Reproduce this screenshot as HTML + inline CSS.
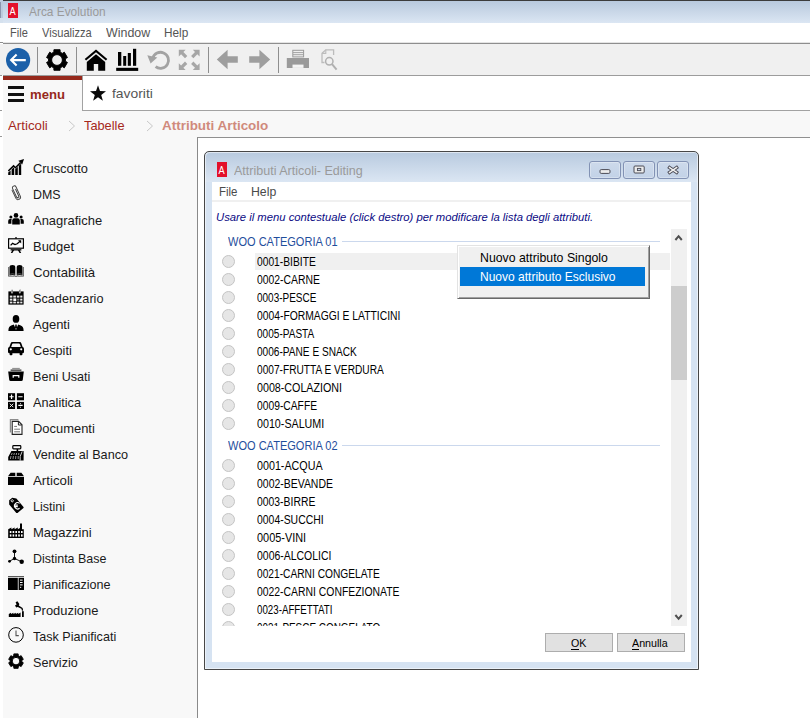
<!DOCTYPE html>
<html lang="it"><head><meta charset="utf-8"><title>Arca Evolution</title><style>html,body{margin:0;padding:0}body{width:810px;height:718px;position:relative;overflow:hidden;background:#fff;font-family:"Liberation Sans",sans-serif}
.r{position:absolute}.t{position:absolute;white-space:nowrap;transform-origin:0 0}</style></head><body>
<div class="r" style="left:0px;top:0px;width:3px;height:18px;background:#bccadc;"></div>
<div class="r" style="left:0px;top:18px;width:3px;height:5px;background:#d5e1ee;"></div>
<div class="r" style="left:0px;top:2px;width:1px;height:16px;background:#8c95ad;"></div>
<div class="r" style="left:0px;top:44px;width:3px;height:31px;background:#f0f0f0;"></div>
<div class="r" style="left:0px;top:75px;width:2px;height:1px;background:#999;"></div>
<div class="r" style="left:0px;top:110px;width:2px;height:1px;background:#999;"></div>
<div class="r" style="left:0px;top:136px;width:2px;height:1px;background:#999;"></div>
<div class="r" style="left:3px;top:0px;width:807px;height:1px;background:#3c3c3c;"></div>
<div class="r" style="left:3px;top:1px;width:807px;height:22px;background:linear-gradient(#b8c9dd,#dbe6f3);"></div>
<div class="r" style="left:8px;top:3px;width:10px;height:15px;background:#e3102a;color:#fff;font-size:11px;line-height:15px;text-align:center;overflow:hidden"><span style="display:inline-block;position:relative;top:0.5px;transform:scaleX(.84)">A</span></div>
<span id="t1" class="t" style="left:29px;top:5.00px;font-size:13px;line-height:13px;color:#9a9a9a;transform:scaleX(0.9143);">Arca Evolution</span>
<div class="r" style="left:3px;top:23px;width:807px;height:19px;background:#fff;"></div>
<span id="t2" class="t" style="left:10px;top:26.00px;font-size:13px;line-height:13px;color:#555;transform:scaleX(0.8476);">File</span>
<span id="t3" class="t" style="left:42px;top:26.00px;font-size:13px;line-height:13px;color:#555;transform:scaleX(0.8534);">Visualizza</span>
<span id="t4" class="t" style="left:106px;top:26.00px;font-size:13px;line-height:13px;color:#555;transform:scaleX(0.9565);">Window</span>
<span id="t5" class="t" style="left:164px;top:26.00px;font-size:13px;line-height:13px;color:#555;transform:scaleX(0.9074);">Help</span>
<div class="r" style="left:3px;top:42px;width:807px;height:1px;background:#e4e4e4;"></div>
<div class="r" style="left:3px;top:43px;width:807px;height:1px;background:#8e8e8e;"></div>
<div class="r" style="left:0px;top:42px;width:3px;height:1px;background:#8e8e8e;"></div>
<div class="r" style="left:3px;top:44px;width:807px;height:31px;background:#f0f0f0;"></div>
<div class="r" style="left:3px;top:75px;width:807px;height:1px;background:#9c9c9c;"></div>
<div class="r" style="left:37px;top:47px;width:1px;height:26px;background:#8e8e8e;"></div>
<div class="r" style="left:76px;top:47px;width:1px;height:26px;background:#8e8e8e;"></div>
<div class="r" style="left:208px;top:47px;width:1px;height:26px;background:#8e8e8e;"></div>
<div class="r" style="left:278px;top:47px;width:1px;height:26px;background:#8e8e8e;"></div>
<svg class="r" style="left:3px;top:44px" width="340" height="31" viewBox="3 44 340 31">
<circle cx="18.1" cy="60.1" r="12.1" fill="#1b60a9"/>
<path d="M25.8 60.1 H11.5 M16.6 54.6 L11.1 60.1 L16.6 65.6" stroke="#fff" stroke-width="2.1" fill="none" stroke-linecap="butt" stroke-linejoin="miter"/>
<path d="M53.95 52.06 L53.91 49.76 L60.09 49.76 L60.05 52.06 L62.35 53.39 L64.32 52.20 L67.42 57.56 L65.40 58.67 L65.40 61.33 L67.42 62.44 L64.32 67.80 L62.35 66.61 L60.05 67.94 L60.09 70.24 L53.91 70.24 L53.95 67.94 L51.65 66.61 L49.68 67.80 L46.58 62.44 L48.60 61.33 L48.60 58.67 L46.58 57.56 L49.68 52.20 L51.65 53.39 Z M51.60 60.00 A5.4 5.4 0 1 0 62.40 60.00 A5.4 5.4 0 1 0 51.60 60.00 Z" fill="#000" fill-rule="evenodd" stroke="#000" stroke-width="1" stroke-linejoin="round"/>
<!-- home -->
<path d="M96 49.4 L107.3 58.9 L105.9 60.6 L96 52.3 L86.1 60.6 L84.7 58.9 Z" fill="#000"/>
<path d="M96 54.3 L105.2 62 V70.8 H98.2 V64 H93.8 V70.8 H86.8 V62 Z" fill="#000"/>
<!-- chart -->
<rect x="116.2" y="67.8" width="22" height="3.1" fill="#000"/>
<rect x="118" y="52" width="3.3" height="13.8" fill="#000"/>
<rect x="123.2" y="56" width="3" height="9.8" fill="#000"/>
<rect x="127.8" y="53" width="3.1" height="12.8" fill="#000"/>
<rect x="133" y="48.8" width="3.2" height="17" fill="#000"/>
<!-- refresh -->
<path d="M152.8 58.2 A8 8 0 1 1 155.6 66.6" stroke="#a2a2a2" stroke-width="2.8" fill="none"/>
<path d="M147.3 55.2 L157.3 57.6 L150.6 63.6 Z" fill="#a2a2a2"/>
<!-- expand -->
<g fill="#a6a6a6" stroke="#a6a6a6" stroke-width="0">
<path d="M178.8 49.8 H185.6 L183.4 52 L187.3 55.9 L185 58.2 L181.1 54.3 L178.8 56.6 Z"/>
<path d="M199.6 49.8 V56.6 L197.3 54.3 L193.4 58.2 L191.1 55.9 L195 52 L192.8 49.8 Z"/>
<path d="M178.8 70 V63.2 L181.1 65.5 L185 61.6 L187.3 63.9 L183.4 67.8 L185.6 70 Z"/>
<path d="M199.6 70 H192.8 L195 67.8 L191.1 63.9 L193.4 61.6 L197.3 65.5 L199.6 63.2 Z"/>
</g>
<!-- arrows -->
<path d="M216.8 59.5 L227.6 49.8 V56.2 H237.8 V62.8 H227.6 V69.2 Z" fill="#9e9e9e"/>
<path d="M270.2 59.5 L259.4 49.8 V56.2 H249.2 V62.8 H259.4 V69.2 Z" fill="#9e9e9e"/>
<!-- printer -->
<rect x="286.8" y="58" width="22.2" height="10" fill="#9a9a9a"/>
<rect x="292.5" y="64.6" width="11" height="3.3" fill="#f4f4f4"/>
<rect x="292.8" y="50.3" width="10.8" height="6.6" fill="#f0f0f0" stroke="#9a9a9a" stroke-width="1"/>
<path d="M293 52.6 H303.4 M293 54.7 H303.4" stroke="#9a9a9a" stroke-width="0.9"/>
<!-- preview -->
<path d="M324.5 62.5 H322 V53.2 L325.8 49.8 H333.6 V55" stroke="#bcbcbc" stroke-width="1.3" fill="none"/>
<path d="M322 53.4 H325.8 V49.8" stroke="#bcbcbc" stroke-width="1.1" fill="none"/>
<circle cx="329.3" cy="61.3" r="3.7" stroke="#b0b0b0" stroke-width="1.5" fill="none"/>
<path d="M332 64.2 L336.6 69.6" stroke="#b0b0b0" stroke-width="2"/>
</svg>

<div class="r" style="left:3px;top:76px;width:807px;height:34px;background:#fff;"></div>
<div class="r" style="left:3px;top:76px;width:79px;height:35px;background:#f8f8f8;"></div>
<div class="r" style="left:3px;top:76px;width:79px;height:4px;background:#96281b;"></div>
<div class="r" style="left:82px;top:76px;width:1px;height:34px;background:#a2a2a2;"></div>
<div class="r" style="left:82px;top:110px;width:728px;height:1px;background:#a2a2a2;"></div>
<div class="r" style="left:8px;top:86px;width:16px;height:3px;background:#111;"></div>
<div class="r" style="left:8px;top:92.5px;width:16px;height:3px;background:#111;"></div>
<div class="r" style="left:8px;top:99px;width:16px;height:3px;background:#111;"></div>
<span id="t6" class="t" style="left:30.3px;top:88.00px;font-size:13px;line-height:13px;color:#96281b;font-weight:bold;transform:scaleX(1.0086);">menu</span>
<svg class="r" style="left:90px;top:85px" width="16" height="16" viewBox="0 0 16 16"><path d="M8 0.3 L10 6 L16 6.2 L11.2 9.9 L12.9 15.8 L8 12.3 L3.1 15.8 L4.8 9.9 L0 6.2 L6 6 Z" fill="#0a0a0a"/></svg>
<span id="t7" class="t" style="left:112px;top:87.00px;font-size:13px;line-height:13px;color:#555;transform:scaleX(1.0658);">favoriti</span>
<div class="r" style="left:3px;top:111px;width:807px;height:26px;background:#f8f8f8;"></div>
<div class="r" style="left:3px;top:137px;width:194px;height:1px;background:#f8f8f8;"></div>
<span id="t8" class="t" style="left:8px;top:119.00px;font-size:13px;line-height:13px;color:#a5281c;transform:scaleX(1.0205);">Articoli</span>
<span id="t9" class="t" style="left:84px;top:119.00px;font-size:13px;line-height:13px;color:#a5281c;transform:scaleX(0.9829);">Tabelle</span>
<span id="t10" class="t" style="left:162px;top:119.00px;font-size:13px;line-height:13px;color:#d08a7c;font-weight:bold;transform:scaleX(1.0340);">Attributi Articolo</span>
<svg class="r" style="left:68px;top:120px" width="8" height="12" viewBox="0 0 8 12"><path d="M1 1 L6.5 6 L1 11" stroke="#c8c8c8" stroke-width="1" fill="none"/></svg>
<svg class="r" style="left:146px;top:120px" width="8" height="12" viewBox="0 0 8 12"><path d="M1 1 L6.5 6 L1 11" stroke="#c8c8c8" stroke-width="1" fill="none"/></svg>
<div class="r" style="left:3px;top:138px;width:194px;height:580px;background:#f8f8f8;"></div>
<div class="r" style="left:197px;top:137px;width:613px;height:581px;background:#fff;box-sizing:border-box;border-left:1px solid #8a8a8a;border-top:1px solid #909090;"></div>
<span id="t11" class="t" style="left:33px;top:162.00px;font-size:13px;line-height:13px;color:#1a1a1a;transform:scaleX(0.9875);">Cruscotto</span>
<svg class="r" style="left:8px;top:159px" width="16" height="16" viewBox="0 0 16 16"><path d="M0.2 16 V13.6 L2.6 11.4 V16 Z M3.6 16 V10.4 L5.6 8.6 L6.2 9.2 V16 Z M7.2 16 V10.2 L9.8 7.8 V16 Z M10.8 16 V6.8 L13.2 4.6 V16 Z" fill="#000"/><path d="M0.3 12 L5.6 6.9 L7.4 8.7 L12.6 3.6" stroke="#000" stroke-width="1.5" fill="none"/><path d="M10.4 1.8 L16 0 L14.2 5.6 Z" fill="#000"/></svg>
<span id="t12" class="t" style="left:33px;top:188.00px;font-size:13px;line-height:13px;color:#1a1a1a;transform:scaleX(0.9517);">DMS</span>
<svg class="r" style="left:8px;top:185px" width="16" height="16" viewBox="0 0 16 16"><g transform="rotate(-25 8 8)" fill="none" stroke="#3a3a3a" stroke-width="0.9"><path d="M5.6 3.4 V12.6 A2.5 2.5 0 0 0 10.6 12.6 V2.6 A1.9 1.9 0 0 0 6.8 2.6 V11.8 A1.2 1.2 0 0 0 9.2 11.8 V4.2"/><path d="M6.2 3.4 V12.6 A1.9 1.9 0 0 0 10 12.6" stroke="#777" stroke-width="0.5"/></g></svg>
<span id="t13" class="t" style="left:33px;top:214.00px;font-size:13px;line-height:13px;color:#1a1a1a;transform:scaleX(0.9957);">Anagrafiche</span>
<svg class="r" style="left:8px;top:211px" width="16" height="16" viewBox="0 0 16 16"><circle cx="8" cy="4.4" r="2.3" fill="#000"/><path d="M4.2 13.6 V9.6 Q4.2 7.2 6.4 7.2 H9.6 Q11.8 7.2 11.8 9.6 V13.6 Z" fill="#000"/><circle cx="2.9" cy="6" r="1.5" fill="#000"/><circle cx="13.1" cy="6" r="1.5" fill="#000"/><path d="M0.2 12.8 V10 Q0.2 8 2 8 H3.8 Q3.4 8.8 3.4 9.6 V12.8 Z M15.8 12.8 V10 Q15.8 8 14 8 H12.2 Q12.6 8.8 12.6 9.6 V12.8 Z" fill="#000"/></svg>
<span id="t14" class="t" style="left:33px;top:240.00px;font-size:13px;line-height:13px;color:#1a1a1a;transform:scaleX(0.9951);">Budget</span>
<svg class="r" style="left:8px;top:237px" width="16" height="16" viewBox="0 0 16 16"><rect x="0.6" y="1.8" width="14.8" height="9.4" fill="#fff" stroke="#000" stroke-width="1.2"/><rect x="7.2" y="0.2" width="1.6" height="1.4" fill="#000"/><path d="M2.6 8.4 L4.6 6.4 L7 7.6 L9.2 6.8 L12.4 4" stroke="#000" stroke-width="1.3" fill="none"/><path d="M10 3.2 H13.2 V6.4 Z" fill="#000"/><rect x="2.6" y="12.2" width="10.8" height="1.3" fill="#000"/><path d="M4.4 13 L2.8 16 H4.4 L6.2 13 Z M11.6 13 L13.2 16 H11.6 L9.8 13 Z" fill="#000"/></svg>
<span id="t15" class="t" style="left:33px;top:266.00px;font-size:13px;line-height:13px;color:#1a1a1a;transform:scaleX(1.0115);">Contabilità</span>
<svg class="r" style="left:8px;top:263px" width="16" height="16" viewBox="0 0 16 16"><path d="M1.5 12.4 V4.2 Q1.5 2 4.4 2 Q7.3 2 7.3 4.2 V12.4 Q4.4 11.4 1.5 12.4 Z M14.5 12.4 V4.2 Q14.5 2 11.6 2 Q8.7 2 8.7 4.2 V12.4 Q11.6 11.4 14.5 12.4 Z" fill="#000"/><path d="M0.4 4 V13.2 H6.6 Q8 13.9 9.4 13.2 H15.6 V4" stroke="#444" stroke-width="0.8" fill="none"/><path d="M2.2 11.2 Q4.4 10.4 6.8 11.2 M9.2 11.2 Q11.6 10.4 13.8 11.2" stroke="#999" stroke-width="0.6" fill="none"/></svg>
<span id="t16" class="t" style="left:33px;top:292.00px;font-size:13px;line-height:13px;color:#1a1a1a;transform:scaleX(0.9750);">Scadenzario</span>
<svg class="r" style="left:8px;top:289px" width="16" height="16" viewBox="0 0 16 16"><rect x="0.4" y="2.4" width="15.2" height="13.2" fill="#000"/><rect x="3.4" y="0.4" width="1.4" height="3.6" fill="#000" stroke="#fff" stroke-width="0.5"/><rect x="11.2" y="0.4" width="1.4" height="3.6" fill="#000" stroke="#fff" stroke-width="0.5"/><g fill="#e8e8e8"><rect x="1.8" y="6.6" width="2.6" height="2"/><rect x="5.3" y="6.6" width="2.6" height="2"/><rect x="8.8" y="6.6" width="2.6" height="2"/><rect x="12.2" y="6.6" width="2.2" height="2"/><rect x="1.8" y="9.6" width="2.6" height="2"/><rect x="5.3" y="9.4" width="3" height="2.6" fill="#fff"/><rect x="9.2" y="9.6" width="2.2" height="2" fill="#777"/><rect x="12.2" y="9.6" width="2.2" height="2"/><rect x="1.8" y="12.6" width="2.6" height="1.8"/><rect x="5.3" y="12.6" width="2.6" height="1.8"/><rect x="8.8" y="12.6" width="2.6" height="1.8"/><rect x="12.2" y="12.6" width="2.2" height="1.8"/></g></svg>
<span id="t17" class="t" style="left:33px;top:318.00px;font-size:13px;line-height:13px;color:#1a1a1a;">Agenti</span>
<svg class="r" style="left:8px;top:315px" width="16" height="16" viewBox="0 0 16 16"><ellipse cx="8" cy="3.9" rx="3.3" ry="3.9" fill="#000"/><path d="M0.4 16 Q0.4 11.4 3.2 10.6 L6 9.4 L8 12.4 L10 9.4 L12.8 10.6 Q15.6 11.4 15.6 16 Z" fill="#000"/><path d="M5.8 9 L8 15 L10.2 9 Z" fill="#fff"/><path d="M7.4 9.4 H8.6 L9 12.6 L8 14.2 L7 12.6 Z" fill="#000"/></svg>
<span id="t18" class="t" style="left:33px;top:344.00px;font-size:13px;line-height:13px;color:#1a1a1a;transform:scaleX(0.9750);">Cespiti</span>
<svg class="r" style="left:8px;top:341px" width="16" height="16" viewBox="0 0 16 16"><g transform="translate(0 0.7)"><path d="M1 6.4 L2.6 1.8 Q3 0.4 4.4 0.4 H11.6 Q13 0.4 13.4 1.8 L15 6.4 Z" fill="#000"/><path d="M3.2 5.4 L4.2 2.4 Q4.4 1.8 5 1.8 H11 Q11.6 1.8 11.8 2.4 L12.8 5.4 Z" fill="#f4f4f4"/><rect x="0" y="5.2" width="16" height="6.4" rx="1.6" fill="#000"/><circle cx="2.8" cy="7.6" r="1.1" fill="#fff"/><circle cx="13.2" cy="7.6" r="1.1" fill="#fff"/><rect x="1.6" y="11" width="2.8" height="2.6" rx="0.8" fill="#000"/><rect x="11.6" y="11" width="2.8" height="2.6" rx="0.8" fill="#000"/></g></svg>
<span id="t19" class="t" style="left:33px;top:370.00px;font-size:13px;line-height:13px;color:#1a1a1a;transform:scaleX(0.9678);">Beni Usati</span>
<svg class="r" style="left:8px;top:367px" width="16" height="16" viewBox="0 0 16 16"><g transform="translate(0 -0.9)"><rect x="4.2" y="1.8" width="7.6" height="1" fill="#888"/><rect x="2.6" y="3.4" width="10.8" height="1.3" fill="#333"/><path d="M0.2 5.4 H15.8 L14.8 13.6 Q14.6 15 13.4 15 H2.6 Q1.4 15 1.2 13.6 Z" fill="#000"/><path d="M5.2 11.6 V9.6 H10.8 V11.6" stroke="#fff" stroke-width="1.2" fill="none"/></g></svg>
<span id="t20" class="t" style="left:33px;top:396.00px;font-size:13px;line-height:13px;color:#1a1a1a;transform:scaleX(0.9776);">Analitica</span>
<svg class="r" style="left:8px;top:393px" width="16" height="16" viewBox="0 0 16 16"><rect x="0" y="0.2" width="7.1" height="7.1" fill="#000"/><rect x="8.9" y="0.2" width="7.1" height="7.1" fill="#000"/><rect x="0" y="8.9" width="7.1" height="7.1" fill="#000"/><rect x="8.9" y="8.9" width="7.1" height="7.1" fill="#000"/><path d="M1.4 3.75 H5.7 M3.55 1.6 V5.9 M10.3 3.75 H14.6 M10.3 12.45 H14.6" stroke="#fff" stroke-width="1.2"/><path d="M1.8 10.7 L5.3 14.2 M5.3 10.7 L1.8 14.2" stroke="#fff" stroke-width="0.9"/><rect x="12" y="10.2" width="0.9" height="0.9" fill="#fff"/><rect x="12" y="13.8" width="0.9" height="0.9" fill="#fff"/></svg>
<span id="t21" class="t" style="left:33px;top:422.00px;font-size:13px;line-height:13px;color:#1a1a1a;transform:scaleX(0.9952);">Documenti</span>
<svg class="r" style="left:8px;top:419px" width="16" height="16" viewBox="0 0 16 16"><path d="M2.4 13.6 V0.6 H10.4" stroke="#8c8c8c" stroke-width="1.2" fill="none"/><path d="M4.2 2.4 H10.6 L14 5.8 V15.4 H4.2 Z" fill="#fff" stroke="#222" stroke-width="1.1"/><path d="M10.4 2.6 V6 H13.8" stroke="#222" stroke-width="1" fill="none"/><path d="M6.2 7.4 H9 M6.2 10.2 H12 M6.2 12.8 H12" stroke="#777" stroke-width="1"/></svg>
<span id="t22" class="t" style="left:33px;top:448.00px;font-size:13px;line-height:13px;color:#1a1a1a;transform:scaleX(0.9745);">Vendite al Banco</span>
<svg class="r" style="left:8px;top:445px" width="16" height="16" viewBox="0 0 16 16"><rect x="4.8" y="0.6" width="8" height="3.2" rx="0.8" fill="#fff" stroke="#000" stroke-width="1.2"/><rect x="8.6" y="4" width="1.6" height="2.2" fill="#000"/><path d="M3.4 6 H15.6 V15.6 H0.2 V12 Z" fill="#000"/><path d="M12.2 15.6 V11.4 L14.2 6.4" stroke="#fff" stroke-width="0.8" fill="none"/><g stroke="#bbb" stroke-width="0.8"><path d="M4.2 8 L3.4 10 M6.4 8 L5.8 10 M8.6 8 L8.2 10 M10.8 8 L10.6 10 M3 11 L2.4 14 M5.4 11 L5 14 M7.8 11 L7.6 14 M10.2 11 L10.2 14"/></g></svg>
<span id="t23" class="t" style="left:33px;top:474.00px;font-size:13px;line-height:13px;color:#1a1a1a;transform:scaleX(1.0205);">Articoli</span>
<svg class="r" style="left:8px;top:471px" width="16" height="16" viewBox="0 0 16 16"><path d="M2.6 1.8 H7.3 V5 H0.2 Z M13.4 1.8 H8.7 V5 H15.8 Z" fill="#000"/><rect x="0" y="5.8" width="16" height="8.2" fill="#000"/></svg>
<span id="t24" class="t" style="left:33px;top:500.00px;font-size:13px;line-height:13px;color:#1a1a1a;transform:scaleX(0.9636);">Listini</span>
<svg class="r" style="left:8px;top:497px" width="16" height="16" viewBox="0 0 16 16"><g transform="rotate(-40 7.6 7.8)"><path d="M2.9 14.2 V3.4 L5.6 0.2 H9.6 L12.3 3.4 V14.2 Q12.3 15.4 11.1 15.4 H4.1 Q2.9 15.4 2.9 14.2 Z" fill="#000"/><circle cx="7.6" cy="2.6" r="1.1" fill="none" stroke="#fff" stroke-width="0.8"/></g><path d="M11.6 6.4 A3.1 3.1 0 1 0 11.6 11.2 M5.9 8.1 H9.8 M5.9 9.6 H9.8" stroke="#fff" stroke-width="1.1" fill="none"/></svg>
<span id="t25" class="t" style="left:33px;top:526.00px;font-size:13px;line-height:13px;color:#1a1a1a;">Magazzini</span>
<svg class="r" style="left:8px;top:523px" width="16" height="16" viewBox="0 0 16 16"><path d="M0.2 15 V6.2 L3.4 4.4 V6.2 L6.6 4.4 V6.2 L9.8 4.4 V6.2 L12 5 V0.6 H14 V6.2 H15.8 V15 Z" fill="#000"/><g fill="#fff"><rect x="1.8" y="8" width="1.6" height="2"/><rect x="4.6" y="8" width="1.6" height="2"/><rect x="7.4" y="8" width="1.6" height="2"/><rect x="10.2" y="8" width="1.6" height="2"/><rect x="13" y="8" width="1.6" height="2"/><rect x="1.8" y="11.4" width="1.6" height="2.2"/><rect x="4.6" y="11.4" width="1.6" height="2.2"/><rect x="7.4" y="11.4" width="1.6" height="2.2"/><rect x="10.2" y="11.4" width="1.6" height="2.2"/><rect x="13" y="11.4" width="1.6" height="2.2"/></g></svg>
<span id="t26" class="t" style="left:33px;top:552.00px;font-size:13px;line-height:13px;color:#1a1a1a;transform:scaleX(0.9584);">Distinta Base</span>
<svg class="r" style="left:8px;top:549px" width="16" height="16" viewBox="0 0 16 16"><path d="M6.5 2.3 V9.5 L1.3 12.3 M6.5 9.5 L13.8 12.8" stroke="#000" stroke-width="0.9" fill="none"/><circle cx="6.5" cy="2.3" r="1.9" fill="#000"/><circle cx="6.5" cy="9.5" r="1.7" fill="#000"/><circle cx="1.5" cy="12.3" r="1.4" fill="#000"/><circle cx="13.7" cy="12.8" r="2.2" fill="#000"/></svg>
<span id="t27" class="t" style="left:33px;top:578.00px;font-size:13px;line-height:13px;color:#1a1a1a;transform:scaleX(0.9675);">Pianificazione</span>
<svg class="r" style="left:8px;top:575px" width="16" height="16" viewBox="0 0 16 16"><rect x="0" y="1" width="16" height="0.8" fill="#333"/><rect x="0" y="2.8" width="9.8" height="12.2" fill="#000"/><rect x="10.6" y="2.8" width="5.4" height="12.2" fill="#000"/><g fill="#fff"><rect x="12" y="4.6" width="2.6" height="1"/><rect x="12" y="7" width="2.6" height="1"/><rect x="12" y="9.4" width="2.6" height="1"/><rect x="12" y="11.8" width="1.2" height="1"/></g></svg>
<span id="t28" class="t" style="left:33px;top:604.00px;font-size:13px;line-height:13px;color:#1a1a1a;transform:scaleX(0.9939);">Produzione</span>
<svg class="r" style="left:8px;top:601px" width="16" height="16" viewBox="0 0 16 16"><path d="M7.6 1.2 L9.4 0.2 L11.4 3 L10.8 4.6 L14.6 7 L15.2 9.6 L14 9.8 L13.4 7.8 L9.8 6 L8.2 6.4 L7 4.6 L8.6 3.4 Z" fill="#000"/><rect x="14" y="10.2" width="1.8" height="5.8" fill="#000"/><path d="M0.8 16 V13 L3 11.8 V13 L5.4 11.8 V13 L7.8 11.8 V13 L10.2 11.8 V13 L12.6 11.6 V16 Z" fill="#000"/></svg>
<span id="t29" class="t" style="left:33px;top:630.00px;font-size:13px;line-height:13px;color:#1a1a1a;transform:scaleX(0.9674);">Task Pianificati</span>
<svg class="r" style="left:8px;top:627px" width="16" height="16" viewBox="0 0 16 16"><circle cx="8" cy="7.9" r="7.3" fill="none" stroke="#000" stroke-width="1"/><path d="M8 3.4 V8.6 H10.8" stroke="#555" stroke-width="1.1" fill="none"/></svg>
<span id="t30" class="t" style="left:33px;top:656.00px;font-size:13px;line-height:13px;color:#1a1a1a;transform:scaleX(0.9674);">Servizio</span>
<svg class="r" style="left:8px;top:653px" width="16" height="16" viewBox="0 0 16 16"><path d="M5.89 2.59 L5.83 0.92 L10.17 0.92 L10.11 2.59 L11.71 3.51 L13.13 2.63 L15.30 6.39 L13.83 7.18 L13.83 9.02 L15.30 9.81 L13.13 13.57 L11.71 12.69 L10.11 13.61 L10.17 15.28 L5.83 15.28 L5.89 13.61 L4.29 12.69 L2.87 13.57 L0.70 9.81 L2.17 9.02 L2.17 7.18 L0.70 6.39 L2.87 2.63 L4.29 3.51 Z M4.20 8.10 A3.8 3.8 0 1 0 11.80 8.10 A3.8 3.8 0 1 0 4.20 8.10 Z" fill="#000" fill-rule="evenodd" stroke="#000" stroke-width="1" stroke-linejoin="round"/></svg>
<div class="r" style="left:204px;top:151px;width:495px;height:519px;box-sizing:border-box;border:1px solid #474747;border-radius:5px 5px 0 0;background:linear-gradient(#b8cadf,#dbe6f3) 0 0/100% 30px no-repeat,#d6e3f2;box-shadow:inset 1px 1px 0 rgba(255,255,255,.55),inset -1px -1px 0 rgba(255,255,255,.55)"></div>
<div class="r" style="left:217px;top:162px;width:10px;height:15px;background:#e3102a;color:#fff;font-size:11px;line-height:15px;text-align:center;overflow:hidden"><span style="display:inline-block;position:relative;top:0.5px;transform:scaleX(.84)">A</span></div>
<span id="t31" class="t" style="left:234px;top:164.00px;font-size:13px;line-height:13px;color:#9a9a9a;transform:scaleX(0.9634);">Attributi Articoli- Editing</span>
<div class="r" style="left:589px;top:161px;width:32px;height:18px;box-sizing:border-box;border:1px solid #8292b4;border-radius:3px;background:linear-gradient(#cddaeb,#c2d2e7);box-shadow:inset 0 0 0 1px rgba(255,255,255,.3)"></div>
<div class="r" style="left:623px;top:161px;width:32px;height:18px;box-sizing:border-box;border:1px solid #8292b4;border-radius:3px;background:linear-gradient(#cddaeb,#c2d2e7);box-shadow:inset 0 0 0 1px rgba(255,255,255,.3)"></div>
<div class="r" style="left:657px;top:161px;width:32px;height:18px;box-sizing:border-box;border:1px solid #8292b4;border-radius:3px;background:linear-gradient(#cddaeb,#c2d2e7);box-shadow:inset 0 0 0 1px rgba(255,255,255,.3)"></div>
<svg class="r" style="left:585px;top:158px" width="110" height="24" viewBox="585 158 110 24">
<rect x="600" y="169.6" width="10" height="3.8" rx="1.2" fill="#ececec" stroke="#4a4a55" stroke-width="1"/>
<rect x="634" y="166" width="10.2" height="7" rx="1" fill="#ececec" stroke="#4a4a55" stroke-width="1"/>
<rect x="637.4" y="168.4" width="3.4" height="2.2" fill="#c6d5e9" stroke="#4a4a55" stroke-width="0.9"/>
<path d="M669.6 167.6 L676.6 172.4 M676.6 167.6 L669.6 172.4" stroke="#4a4a55" stroke-width="3.4" stroke-linecap="square"/>
<path d="M669.6 167.6 L676.6 172.4 M676.6 167.6 L669.6 172.4" stroke="#f0f0f0" stroke-width="1.6" stroke-linecap="square"/>
</svg>

<div class="r" style="left:212px;top:182px;width:479px;height:480px;background:#fff;"></div>
<div class="r" style="left:212px;top:200px;width:479px;height:2px;background:#f0f0f0;"></div>
<span id="t32" class="t" style="left:219px;top:185.00px;font-size:13px;line-height:13px;color:#4a4a4a;transform:scaleX(0.8810);">File</span>
<span id="t33" class="t" style="left:251px;top:185.00px;font-size:13px;line-height:13px;color:#4a4a4a;transform:scaleX(0.9444);">Help</span>
<span id="t34" class="t" style="left:216.3px;top:211.69px;font-size:11px;line-height:11px;color:#0a0a84;font-style:italic;transform:scaleX(1.0245);">Usare il menu contestuale (click destro) per modificare la lista degli attributi.</span>
<div class="r" style="left:212px;top:228px;width:479px;height:398px;overflow:hidden"><div class="r" style="left:-212px;top:-228px">
<span id="t35" class="t" style="left:228px;top:235.00px;font-size:13px;line-height:13px;color:#1f4e9c;transform:scaleX(0.8488);">WOO CATEGORIA 01</span>
<div class="r" style="left:342px;top:241px;width:318px;height:1px;background:#cbd8ed;"></div>
<div class="r" style="left:255px;top:253px;width:415px;height:17px;background:#f0f0f0;"></div>
<div class="r" style="left:222px;top:255px;width:13px;height:13px;box-sizing:border-box;border:1px solid #c4c4c4;border-radius:50%;background:#e6e6e6"></div>
<span id="t36" class="t" style="left:257px;top:255.84px;font-size:12px;line-height:12px;color:#000;transform:scaleX(0.8551);">0001-BIBITE</span>
<div class="r" style="left:222px;top:273px;width:13px;height:13px;box-sizing:border-box;border:1px solid #c4c4c4;border-radius:50%;background:#e6e6e6"></div>
<span id="t37" class="t" style="left:257px;top:273.84px;font-size:12px;line-height:12px;color:#000;transform:scaleX(0.8658);">0002-CARNE</span>
<div class="r" style="left:222px;top:291px;width:13px;height:13px;box-sizing:border-box;border:1px solid #c4c4c4;border-radius:50%;background:#e6e6e6"></div>
<span id="t38" class="t" style="left:257px;top:291.84px;font-size:12px;line-height:12px;color:#000;transform:scaleX(0.8310);">0003-PESCE</span>
<div class="r" style="left:222px;top:309px;width:13px;height:13px;box-sizing:border-box;border:1px solid #c4c4c4;border-radius:50%;background:#e6e6e6"></div>
<span id="t39" class="t" style="left:257px;top:309.84px;font-size:12px;line-height:12px;color:#000;transform:scaleX(0.8614);">0004-FORMAGGI E LATTICINI</span>
<div class="r" style="left:222px;top:327px;width:13px;height:13px;box-sizing:border-box;border:1px solid #c4c4c4;border-radius:50%;background:#e6e6e6"></div>
<span id="t40" class="t" style="left:257px;top:327.84px;font-size:12px;line-height:12px;color:#000;transform:scaleX(0.8382);">0005-PASTA</span>
<div class="r" style="left:222px;top:345px;width:13px;height:13px;box-sizing:border-box;border:1px solid #c4c4c4;border-radius:50%;background:#e6e6e6"></div>
<span id="t41" class="t" style="left:257px;top:345.84px;font-size:12px;line-height:12px;color:#000;transform:scaleX(0.8420);">0006-PANE E SNACK</span>
<div class="r" style="left:222px;top:363px;width:13px;height:13px;box-sizing:border-box;border:1px solid #c4c4c4;border-radius:50%;background:#e6e6e6"></div>
<span id="t42" class="t" style="left:257px;top:363.84px;font-size:12px;line-height:12px;color:#000;transform:scaleX(0.8460);">0007-FRUTTA E VERDURA</span>
<div class="r" style="left:222px;top:381px;width:13px;height:13px;box-sizing:border-box;border:1px solid #c4c4c4;border-radius:50%;background:#e6e6e6"></div>
<span id="t43" class="t" style="left:257px;top:381.84px;font-size:12px;line-height:12px;color:#000;transform:scaleX(0.8916);">0008-COLAZIONI</span>
<div class="r" style="left:222px;top:399px;width:13px;height:13px;box-sizing:border-box;border:1px solid #c4c4c4;border-radius:50%;background:#e6e6e6"></div>
<span id="t44" class="t" style="left:257px;top:399.84px;font-size:12px;line-height:12px;color:#000;transform:scaleX(0.8571);">0009-CAFFE</span>
<div class="r" style="left:222px;top:417px;width:13px;height:13px;box-sizing:border-box;border:1px solid #c4c4c4;border-radius:50%;background:#e6e6e6"></div>
<span id="t45" class="t" style="left:257px;top:417.84px;font-size:12px;line-height:12px;color:#000;transform:scaleX(0.8920);">0010-SALUMI</span>
<span id="t46" class="t" style="left:228px;top:439.00px;font-size:13px;line-height:13px;color:#1f4e9c;transform:scaleX(0.8488);">WOO CATEGORIA 02</span>
<div class="r" style="left:342px;top:445px;width:318px;height:1px;background:#cbd8ed;"></div>
<div class="r" style="left:222px;top:459px;width:13px;height:13px;box-sizing:border-box;border:1px solid #c4c4c4;border-radius:50%;background:#e6e6e6"></div>
<span id="t47" class="t" style="left:257px;top:459.84px;font-size:12px;line-height:12px;color:#000;transform:scaleX(0.8932);">0001-ACQUA</span>
<div class="r" style="left:222px;top:477px;width:13px;height:13px;box-sizing:border-box;border:1px solid #c4c4c4;border-radius:50%;background:#e6e6e6"></div>
<span id="t48" class="t" style="left:257px;top:477.84px;font-size:12px;line-height:12px;color:#000;transform:scaleX(0.8713);">0002-BEVANDE</span>
<div class="r" style="left:222px;top:495px;width:13px;height:13px;box-sizing:border-box;border:1px solid #c4c4c4;border-radius:50%;background:#e6e6e6"></div>
<span id="t49" class="t" style="left:257px;top:495.84px;font-size:12px;line-height:12px;color:#000;transform:scaleX(0.8657);">0003-BIRRE</span>
<div class="r" style="left:222px;top:513px;width:13px;height:13px;box-sizing:border-box;border:1px solid #c4c4c4;border-radius:50%;background:#e6e6e6"></div>
<span id="t50" class="t" style="left:257px;top:513.84px;font-size:12px;line-height:12px;color:#000;transform:scaleX(0.8688);">0004-SUCCHI</span>
<div class="r" style="left:222px;top:531px;width:13px;height:13px;box-sizing:border-box;border:1px solid #c4c4c4;border-radius:50%;background:#e6e6e6"></div>
<span id="t51" class="t" style="left:257px;top:531.84px;font-size:12px;line-height:12px;color:#000;transform:scaleX(0.9093);">0005-VINI</span>
<div class="r" style="left:222px;top:549px;width:13px;height:13px;box-sizing:border-box;border:1px solid #c4c4c4;border-radius:50%;background:#e6e6e6"></div>
<span id="t52" class="t" style="left:257px;top:549.84px;font-size:12px;line-height:12px;color:#000;transform:scaleX(0.8718);">0006-ALCOLICI</span>
<div class="r" style="left:222px;top:567px;width:13px;height:13px;box-sizing:border-box;border:1px solid #c4c4c4;border-radius:50%;background:#e6e6e6"></div>
<span id="t53" class="t" style="left:257px;top:567.84px;font-size:12px;line-height:12px;color:#000;transform:scaleX(0.8497);">0021-CARNI CONGELATE</span>
<div class="r" style="left:222px;top:585px;width:13px;height:13px;box-sizing:border-box;border:1px solid #c4c4c4;border-radius:50%;background:#e6e6e6"></div>
<span id="t54" class="t" style="left:257px;top:585.84px;font-size:12px;line-height:12px;color:#000;transform:scaleX(0.8659);">0022-CARNI CONFEZIONATE</span>
<div class="r" style="left:222px;top:603px;width:13px;height:13px;box-sizing:border-box;border:1px solid #c4c4c4;border-radius:50%;background:#e6e6e6"></div>
<span id="t55" class="t" style="left:257px;top:603.84px;font-size:12px;line-height:12px;color:#000;transform:scaleX(0.8118);">0023-AFFETTATI</span>
<div class="r" style="left:222px;top:621px;width:13px;height:13px;box-sizing:border-box;border:1px solid #c4c4c4;border-radius:50%;background:#e6e6e6"></div>
<span id="t56" class="t" style="left:257px;top:621.84px;font-size:12px;line-height:12px;color:#000;transform:scaleX(0.8268);">0031-PESCE CONGELATO</span>
</div></div>
<div class="r" style="left:671px;top:229px;width:16px;height:397px;background:#f0f0f0;"></div>
<div class="r" style="left:671px;top:286px;width:16px;height:94px;background:#cdcdcd;"></div>
<svg class="r" style="left:674px;top:234px" width="10" height="8" viewBox="0 0 10 8"><path d="M1.4 6 L4.6 2.2 L7.8 6" stroke="#505050" stroke-width="2" fill="none"/></svg>
<svg class="r" style="left:674px;top:613px" width="10" height="8" viewBox="0 0 10 8"><path d="M1.4 2 L4.6 5.8 L7.8 2" stroke="#505050" stroke-width="2" fill="none"/></svg>
<div class="r" style="left:457px;top:245px;width:193px;height:54px;box-sizing:border-box;background:#f0f0f0;border:1px solid;border-color:#e3e3e3 #696969 #696969 #e3e3e3;box-shadow:inset 1px 1px 0 #fff,inset -1px -1px 0 #a0a0a0"></div>
<div class="r" style="left:460px;top:267px;width:185px;height:19px;background:#0078d7;"></div>
<span id="t57" class="t" style="left:480px;top:251.00px;font-size:13px;line-height:13px;color:#000;transform:scaleX(0.9467);">Nuovo attributo Singolo</span>
<span id="t58" class="t" style="left:480px;top:270.00px;font-size:13px;line-height:13px;color:#fff;transform:scaleX(0.9238);">Nuovo attributo Esclusivo</span>
<div class="r" style="left:545px;top:633px;width:68px;height:19px;box-sizing:border-box;border:1px solid #adadad;background:#e1e1e1"></div>
<div class="r" style="left:617px;top:633px;width:68px;height:19px;box-sizing:border-box;border:1px solid #adadad;background:#e1e1e1"></div>
<span id="t59" class="t" style="left:571px;top:637.99px;font-size:11px;line-height:11px;color:#000;transform:scaleX(0.9688);">OK</span>
<div class="r" style="left:571px;top:649px;width:8px;height:1px;background:#000;"></div>
<span id="t60" class="t" style="left:632px;top:637.99px;font-size:11px;line-height:11px;color:#000;transform:scaleX(0.9730);">Annulla</span>
<div class="r" style="left:632px;top:649px;width:7px;height:1px;background:#000;"></div>
</body></html>
